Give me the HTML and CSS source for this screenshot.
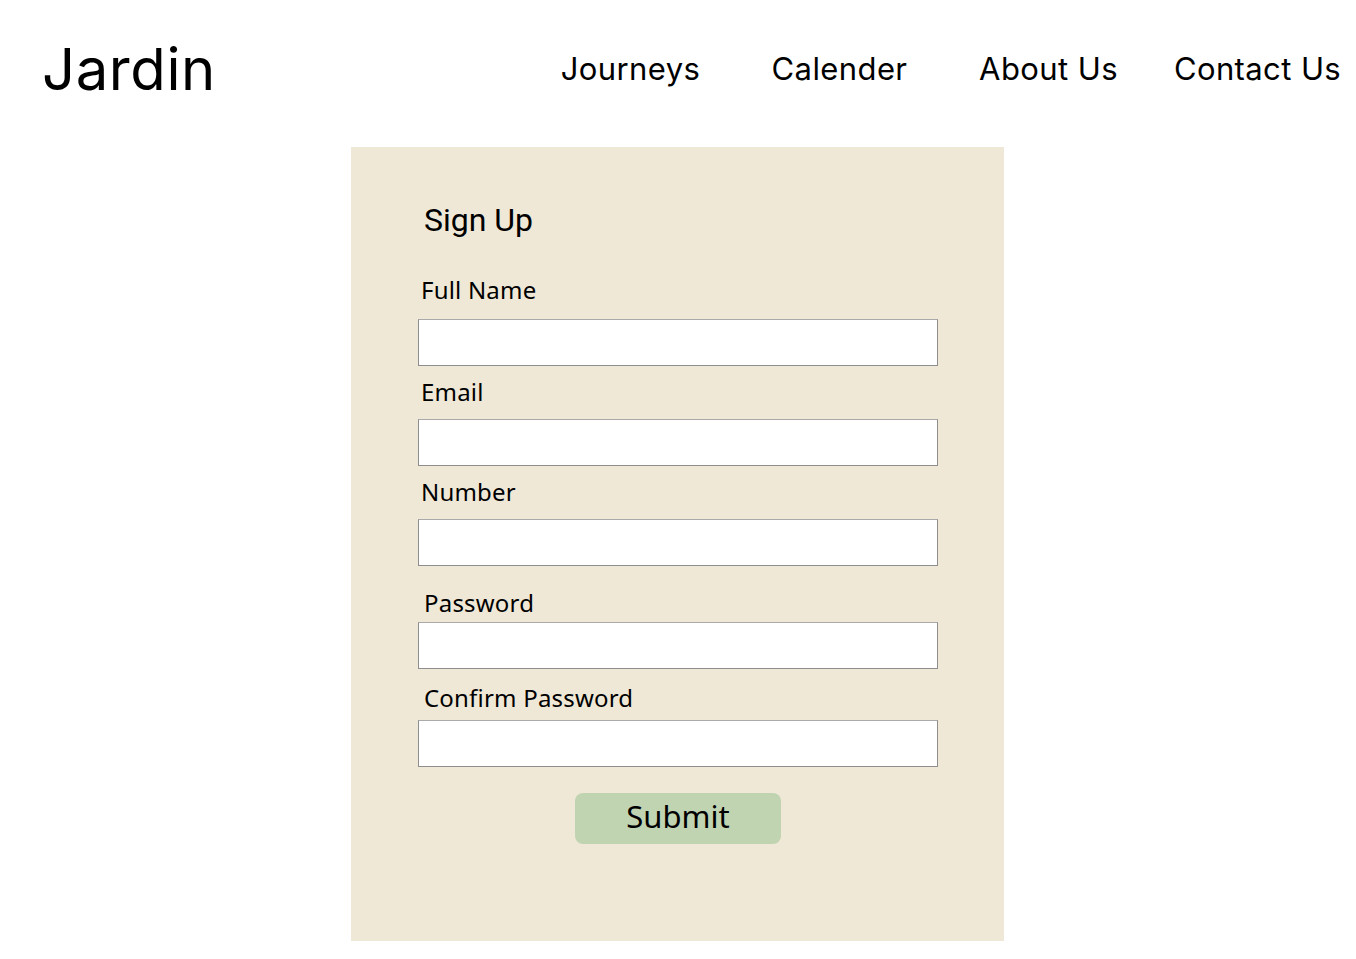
FILE: index.html
```html
<!DOCTYPE html>
<html lang="en">
<head>
<meta charset="utf-8">
<title>Jardin - Sign Up</title>
<link rel="stylesheet" href="styles.css">
</head>
<body>
<header class="site-header">
  <div class="logo">Jardin</div>
  <nav class="nav">
    <a class="nav-item" href="#">Journeys</a>
    <a class="nav-item" href="#">Calender</a>
    <a class="nav-item" href="#">About Us</a>
    <a class="nav-item" href="#">Contact Us</a>
  </nav>
</header>
<main class="main">
  <form class="card">
    <h1 class="title">Sign Up</h1>
    <label class="label label-name">Full Name</label>
    <input class="input" type="text">
    <label class="label label-email">Email</label>
    <input class="input" type="email">
    <label class="label label-number">Number</label>
    <input class="input" type="text">
    <label class="label label-pass">Password</label>
    <input class="input" type="password">
    <label class="label label-confirm">Confirm Password</label>
    <input class="input" type="password">
    <button class="submit" type="button">Submit</button>
  </form>
</main>
</body>
</html>
```

FILE: styles.css
```css
html, body {
  margin: 0;
  padding: 0;
  overflow-x: hidden;
  background: #ffffff;
  color: #000000;
}

.site-header {
  display: flex;
  justify-content: space-between;
  align-items: flex-start;
  height: 147px;
  box-sizing: border-box;
  padding: 34px 0 0 42px;
}

.logo {
  font-family: "Inter", sans-serif;
  font-size: 58px;
  line-height: 70px;
  font-weight: 400;
  letter-spacing: 0.6px;
}

.nav {
  display: grid;
  grid-template-columns: repeat(4, 209px);
  margin-top: 15px;
  margin-right: -6px;
}

.nav-item {
  font-family: "Inter", sans-serif;
  font-weight: 400;
  font-size: 31px;
  line-height: 40px;
  letter-spacing: 0.4px;
  color: #000;
  text-decoration: none;
  text-align: center;
}

.main {
  display: flex;
  justify-content: center;
  padding-right: 1px;
}

.card {
  width: 653px;
  height: 794px;
  box-sizing: border-box;
  background: #f0e8d6;
  padding: 54px 66px 0 67px;
  display: flex;
  flex-direction: column;
  align-items: stretch;
}

.title {
  margin: 0 0 37px 6px;
  font-family: "Roboto", sans-serif;
  font-weight: 400;
  font-size: 32px;
  line-height: 38px;
}

.label {
  display: block;
  font-family: "Noto Sans", sans-serif;
  font-size: 24px;
  line-height: 28px;
  letter-spacing: 0.2px;
  padding-left: 3px;
  margin-bottom: 13px;
}

.label-name { margin-bottom: 15px; }
.label-email { margin-top: 12px; }
.label-number { margin-top: 12px; }
.label-pass { margin-top: 23px; margin-bottom: 5px; padding-left: 6px; }
.label-confirm { margin-top: 15px; margin-bottom: 8px; padding-left: 6px; }

.input {
  display: block;
  height: 47px;
  box-sizing: border-box;
  margin: 0;
  background: #ffffff;
  border: 1px solid #8e8e8e;
  border-top-color: #aaaaaa;
  border-radius: 0;
  outline: none;
}

.submit {
  align-self: center;
  margin-top: 26px;
  width: 206px;
  height: 51px;
  border: none;
  border-radius: 8px;
  background: #c0d4b2;
  font-family: "Noto Sans", sans-serif;
  font-size: 31px;
  line-height: 46px;
  padding: 0 0 5px;
  color: #000;
}
```
